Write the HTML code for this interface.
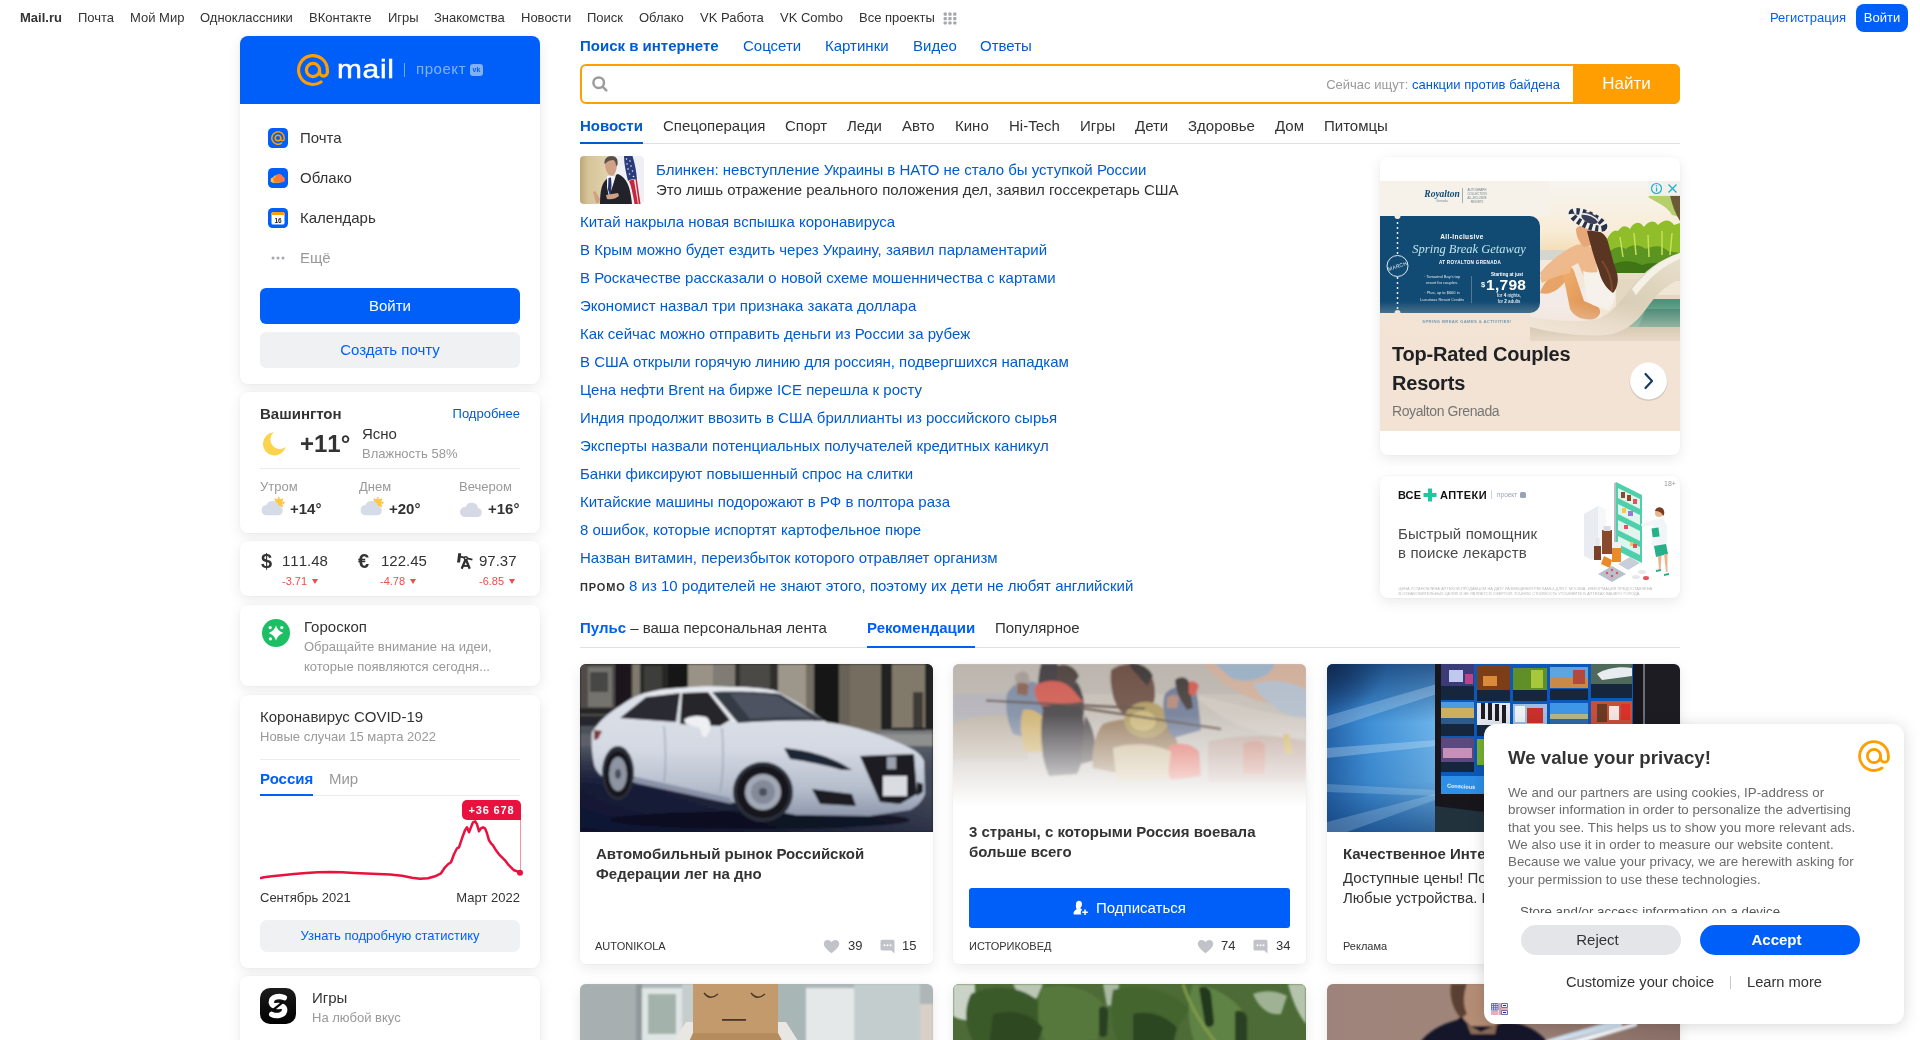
<!DOCTYPE html>
<html lang="ru">
<head>
<meta charset="utf-8">
<title>Mail.ru: почта, поиск в интернете, новости, игры</title>
<style>
*{box-sizing:border-box;margin:0;padding:0}
html,body{width:1920px;height:1040px;overflow:hidden;background:#fff}
body{font-family:"Liberation Sans",Arial,sans-serif;color:#333;font-size:15px;position:relative}
.nk{font-kerning:none}
a{text-decoration:none;color:#005bd1}
.abs{position:absolute}
/* top bar */
#top{position:absolute;left:0;top:0;width:1920px;height:36px;font-size:13px;line-height:36px;color:#333}
#top span,#top a{position:absolute;top:0;white-space:nowrap;color:#333}
#top .reg{color:#005ff9;left:1770px;font-size:13px}
#top .login{left:1856px;top:4px;width:52px;height:28px;line-height:28px;background:#005ff9;color:#fff;border-radius:8px;text-align:center;font-size:13px}
/* cards */
.card{position:absolute;background:#fff;border-radius:8px;box-shadow:0 4px 14px rgba(0,0,0,.085),0 0 3px rgba(0,0,0,.05)}
.grey{color:#999}
/* left */
#hdr{position:absolute;left:0;top:0;width:300px;height:68px;background:#005ff9;border-radius:8px 8px 0 0}
.mi{position:absolute;left:60px;font-size:15px;color:#333;line-height:20px}
.ico{position:absolute;left:28px;width:20px;height:20px;border-radius:4px;background:#005ff9}
.btn{position:absolute;left:20px;width:260px;height:36px;border-radius:6px;text-align:center;line-height:36px;font-size:15px}
.red{font-size:11px;line-height:14px;color:#f04b4b;white-space:nowrap}
.red i{display:inline-block;width:0;height:0;border-left:3.500px solid transparent;border-right:3.500px solid transparent;border-top:5px solid #f04b4b;margin-left:2px;vertical-align:.800px}
/* search */
#stabs a{position:absolute;top:36px;line-height:20px;font-size:15px;color:#005bd1;white-space:nowrap}
#search{position:absolute;left:580px;top:64px;width:1100px;height:40px;border:2px solid #ff9e00;border-radius:6px;background:#fff}
#sbtn{position:absolute;left:1573px;top:64px;width:107px;height:40px;background:#ff9e00;color:#fff;font-size:17px;line-height:39px;text-align:center;border-radius:0 6px 6px 0}
/* news */
#ntabs span{position:absolute;top:116px;line-height:20px;font-size:15px;color:#333;white-space:nowrap}
.nl{position:absolute;left:580px;font-size:15px;line-height:20px;color:#005bd1;white-space:nowrap}

/* feed */
.fc{position:absolute;width:353px;height:300px;background:#fff;border-radius:6px;box-shadow:0 4px 14px rgba(0,0,0,.085),0 0 3px rgba(0,0,0,.05);overflow:hidden}
.fc svg.im{position:absolute;left:0;top:0}
.ft{position:absolute;left:16px;font-size:15px;line-height:20px;font-weight:bold;color:#333;white-space:nowrap}
.src{position:absolute;left:15px;top:275px;font-size:11px;line-height:14px;color:#333;white-space:nowrap}
.cnt{position:absolute;top:272px;font-size:13px;line-height:20px;color:#333}
/* popup */
#pp{position:absolute;left:1484px;top:724px;width:420px;height:300px;background:#fff;border-radius:12px;box-shadow:0 2px 16px rgba(0,0,0,.16);overflow:hidden}
#pp p{position:absolute;left:23px;white-space:nowrap;font-size:13.33px;line-height:17.33px;color:#6b6b6b}
</style>
</head>
<body>
<div id="root" style="position:absolute;left:0;top:0;width:1920px;height:1040px;will-change:transform">

<!-- TOP BAR -->
<div id="top">
<span style="left:20px;font-weight:bold">Mail.ru</span>
<span style="left:78px">Почта</span>
<span style="left:130px">Мой Мир</span>
<span style="left:200px">Одноклассники</span>
<span style="left:309px">ВКонтакте</span>
<span style="left:388px">Игры</span>
<span style="left:434px">Знакомства</span>
<span style="left:521px">Новости</span>
<span style="left:587px">Поиск</span>
<span style="left:639px">Облако</span>
<span style="left:700px">VK Работа</span>
<span style="left:780px">VK Combo</span>
<span style="left:859px">Все проекты</span>
<svg class="abs" style="left:943px;top:11px" width="14" height="14" viewBox="0 -1 16 17.500" fill="#a5a7ad"><rect x="0" y="1" width="4" height="4" rx="1"/><rect x="6" y="1" width="4" height="4" rx="1"/><rect x="12" y="1" width="4" height="4" rx="1"/><rect x="0" y="6.5" width="4" height="4" rx="1"/><rect x="6" y="6.5" width="4" height="4" rx="1"/><rect x="12" y="6.5" width="4" height="4" rx="1"/><rect x="0" y="12" width="4" height="4" rx="1"/><rect x="6" y="12" width="4" height="4" rx="1"/><rect x="12" y="12" width="4" height="4" rx="1"/></svg>
<a class="reg">Регистрация</a>
<a class="login">Войти</a>
</div>

<!-- LEFT COLUMN -->
<div class="card" id="c-auth" style="left:240px;top:36px;width:300px;height:348px">
  <div id="hdr">
    <svg class="abs" style="left:56px;top:17px" width="34" height="34" viewBox="0 0 34 34" fill="none" stroke="#ff9e00" stroke-width="3.2" stroke-linecap="round"><circle cx="17" cy="17" r="6.6"/><path d="M23.6 17v2.2a3.9 3.9 0 0 0 7.8 0V17A14.4 14.4 0 1 0 25 29"/></svg>
    <div class="abs" style="left:97px;top:13px;font-size:26px;line-height:40px;color:#fff;letter-spacing:.6px;font-weight:400;-webkit-text-stroke:.5px #fff;transform:scaleX(1.15);transform-origin:0 0">mail</div>
    <div class="abs" style="left:164px;top:27px;width:1px;height:14px;background:rgba(255,255,255,.45)"></div>
    <div class="abs" style="left:176px;top:22px;font-size:15px;line-height:22px;color:rgba(255,255,255,.5);letter-spacing:.55px">проект</div>
    <div class="abs" style="left:230px;top:28px;width:13px;height:12px;border-radius:3px;background:rgba(255,255,255,.5);color:#005ff9;font-size:7px;line-height:12px;text-align:center;font-weight:bold">vk</div>
  </div>
  <svg class="abs" style="left:28px;top:92px" width="20" height="20" viewBox="0 0 20 20"><rect width="20" height="20" rx="4.500" fill="#005ff9"/><g fill="none" stroke="#ff9e00" stroke-width="1.500" stroke-linecap="round"><circle cx="10" cy="10" r="2.800"/><path d="M12.800 10v1a1.700 1.700 0 0 0 3.400 0v-1a6.200 6.200 0 1 0-2.700 5.100"/></g></svg><div class="mi" style="top:92px">Почта</div>
  <svg class="abs" style="left:28px;top:132px" width="20" height="20" viewBox="0 0 20 20"><rect width="20" height="20" rx="4.500" fill="#005ff9"/><path d="M5.800 14.500h6.500a2.500 2.500 0 0 0 0-5 3 3 0 0 0-5.800-.500A2.800 2.800 0 0 0 5.800 14.500z" fill="#ffc72e" transform="translate(-1.200,.2)"/><path d="M8.200 14.300h6a2.900 2.900 0 0 0 .6-5.700 4 4 0 0 0-7.600.6 2.600 2.600 0 0 0 1 5.100z" fill="#ff7a38"/></svg><div class="mi" style="top:132px">Облако</div>
  <svg class="abs" style="left:28px;top:172px" width="20" height="20" viewBox="0 0 20 20"><rect width="20" height="20" rx="4.500" fill="#005ff9"/><rect x="3.500" y="4" width="13" height="12.500" rx="1.500" fill="#fff"/><path d="M3.500 5.500a1.500 1.500 0 0 1 1.500-1.500h10a1.500 1.500 0 0 1 1.500 1.500v1.500h-13z" fill="#ff9e00"/><text x="10" y="15" font-family="Liberation Sans,sans-serif" font-size="6.500" font-weight="bold" fill="#222" text-anchor="middle">16</text></svg><div class="mi" style="top:172px">Календарь</div>
  <svg class="abs" style="left:31px;top:220px" width="14" height="4" viewBox="0 0 14 4" fill="#a5a7ad"><circle cx="2" cy="2" r="1.500"/><circle cx="7" cy="2" r="1.500"/><circle cx="12" cy="2" r="1.500"/></svg><div class="mi" style="top:212px;color:#999">Ещё</div>
  <div class="btn" style="top:252px;background:#005ff9;color:#fff">Войти</div>
  <div class="btn" style="top:296px;background:#f0f1f3;color:#005ff9">Создать почту</div>
</div>


<!-- WEATHER -->
<div class="card" style="left:240px;top:392px;width:300px;height:141px">
  <div class="abs" style="left:20px;top:12px;font-size:15px;line-height:20px;font-weight:bold;color:#333">Вашингтон</div>
  <a class="abs" style="right:20px;top:12px;font-size:13px;line-height:20px">Подробнее</a>
  <svg class="abs" style="left:21px;top:39px" width="26" height="26" viewBox="0 0 26 26"><path d="M12.800 1.300a11.600 11.600 0 1 0 11.900 14.600A9.300 9.300 0 0 1 12.800 1.300z" fill="#fcd34d"/></svg>
  <div class="abs" style="left:60px;top:36px;font-size:24px;line-height:32px;font-weight:bold;color:#333;font-kerning:none">+11°</div>
  <div class="abs" style="left:122px;top:32px;font-size:15px;line-height:20px">Ясно</div>
  <div class="abs grey" style="left:122px;top:53px;font-size:13px;line-height:18px">Влажность 58%</div>
  <div class="abs" style="left:20px;top:76px;width:260px;height:1px;background:#ececec"></div>
  <div class="abs grey" style="left:20px;top:86px;font-size:13px;line-height:18px">Утром</div>
  <div class="abs grey" style="left:119px;top:86px;font-size:13px;line-height:18px">Днем</div>
  <div class="abs grey" style="left:219px;top:86px;font-size:13px;line-height:18px">Вечером</div>
  <svg class="abs" style="left:20px;top:104px" width="26" height="22" viewBox="0 0 26 22"><g transform="translate(18.8 6.8)"><circle r="4" fill="#ffc83d"/><g fill="#ffb03a"><path d="M0-6.200l1.200 2H-1.200z"/><path d="M0-6.200l1.200 2H-1.200z" transform="rotate(45)"/><path d="M0-6.200l1.200 2H-1.200z" transform="rotate(90)"/><path d="M0-6.200l1.200 2H-1.200z" transform="rotate(135)"/><path d="M0-6.200l1.200 2H-1.200z" transform="rotate(-45)"/><path d="M0-6.200l1.200 2H-1.200z" transform="rotate(-90)"/></g></g><path d="M5.5 19.200h13a4.500 4.500 0 0 0 .6-8.900A6.700 6.700 0 0 0 6.400 9 5.200 5.200 0 0 0 5.500 19.200z" fill="#d6dbe8"/></svg>
  <div class="abs" style="left:50px;top:107px;font-size:15px;line-height:20px;font-weight:bold">+14°</div>
  <svg class="abs" style="left:119px;top:104px" width="26" height="22" viewBox="0 0 26 22"><g transform="translate(18.8 6.8)"><circle r="4" fill="#ffc83d"/><g fill="#ffb03a"><path d="M0-6.200l1.200 2H-1.200z"/><path d="M0-6.200l1.200 2H-1.200z" transform="rotate(45)"/><path d="M0-6.200l1.200 2H-1.200z" transform="rotate(90)"/><path d="M0-6.200l1.200 2H-1.200z" transform="rotate(135)"/><path d="M0-6.200l1.200 2H-1.200z" transform="rotate(-45)"/><path d="M0-6.200l1.200 2H-1.200z" transform="rotate(-90)"/></g></g><path d="M5.5 19.200h13a4.500 4.500 0 0 0 .6-8.900A6.700 6.700 0 0 0 6.400 9 5.200 5.200 0 0 0 5.500 19.200z" fill="#d6dbe8"/></svg>
  <div class="abs" style="left:149px;top:107px;font-size:15px;line-height:20px;font-weight:bold">+20°</div>
  <svg class="abs" style="left:218px;top:104px" width="26" height="22" viewBox="0 0 26 22"><path d="M6.5 21h13a4.5 4.5 0 0 0 .6-8.9A6.5 6.5 0 0 0 7.6 11 5 5 0 0 0 6.500 21z" fill="#d5d9e6"/></svg>
  <div class="abs" style="left:248px;top:107px;font-size:15px;line-height:20px;font-weight:bold">+16°</div>
</div>

<!-- CURRENCY -->
<div class="card" style="left:240px;top:541px;width:300px;height:55px">
  <div class="abs" style="left:21px;top:8px;font-size:20px;line-height:24px;font-weight:bold;color:#333">$</div>
  <div class="abs" style="left:42px;top:10px;font-size:15px;line-height:20px;font-kerning:none">111.48</div>
  <div class="abs red" style="left:42px;top:33px">-3.71 <i></i></div>
  <div class="abs" style="left:118px;top:8px;font-size:20px;line-height:24px;font-weight:bold;color:#333">€</div>
  <div class="abs" style="left:141px;top:10px;font-size:15px;line-height:20px;font-kerning:none">122.45</div>
  <div class="abs red" style="left:140px;top:33px">-4.78 <i></i></div>
  <svg class="abs" style="left:215px;top:11px" width="20" height="18" viewBox="0 0 20 18" fill="none" stroke="#2e2e2e" stroke-linecap="butt" stroke-linejoin="round"><path d="M3.200 1.200h3l-1.100 9.300h-3z" fill="#2e2e2e" stroke="none"/><path d="M5.300 4.700L17.400 7.700" stroke-width="1.800"/><path d="M10.800 7L6.700 16.700M10.800 7L14.700 16.700" stroke-width="2.300"/><path d="M8 13.900h5.600" stroke-width="1.900"/><circle cx="10.800" cy="6.200" r="1.500" fill="#fff" stroke-width="1.400"/></svg>
  <div class="abs" style="left:239px;top:10px;font-size:15px;line-height:20px;font-kerning:none">97.37</div>
  <div class="abs red" style="left:239px;top:33px">-6.85 <i></i></div>
</div>

<!-- HOROSCOPE -->
<div class="card" style="left:240px;top:605px;width:300px;height:81px">
  <svg class="abs" style="left:22px;top:14px" width="28" height="28" viewBox="0 0 28 28"><circle cx="14" cy="14" r="14" fill="#1dbf65"/><path d="M14 6.500Q15.800 12.200 21.300 14Q15.800 15.800 14 21.500Q12.200 15.800 6.700 14Q12.200 12.200 14 6.500z" fill="#fff"/><circle cx="8.200" cy="8.600" r="1.600" fill="#fff"/><circle cx="19.800" cy="8.600" r="1.600" fill="#fff"/><circle cx="8.400" cy="19.800" r="1.600" fill="#fff"/></svg>
  <div class="abs" style="left:64px;top:12px;font-size:15px;line-height:20px">Гороскоп</div>
  <div class="abs grey" style="left:64px;top:32px;font-size:13px;line-height:20px;white-space:nowrap">Обращайте внимание на идеи,<br>которые появляются сегодня...</div>
</div>

<!-- COVID -->
<div class="card" style="left:240px;top:695px;width:300px;height:273px">
  <div class="abs" style="left:20px;top:12px;font-size:15px;line-height:20px">Коронавирус COVID-19</div>
  <div class="abs grey" style="left:20px;top:33px;font-size:13px;line-height:18px">Новые случаи 15 марта 2022</div>
  <div class="abs" style="left:20px;top:64px;width:260px;height:1px;background:#ececec"></div>
  <div class="abs" style="left:20px;top:74px;font-size:15px;line-height:20px;font-weight:bold;color:#005ff9">Россия</div>
  <div class="abs grey" style="left:89px;top:74px;font-size:15px;line-height:20px">Мир</div>
  <div class="abs" style="left:20px;top:100px;width:260px;height:1px;background:#ececec"></div>
  <div class="abs" style="left:20px;top:99px;width:53px;height:2px;background:#005ff9"></div>
  <svg class="abs" style="left:20px;top:104px" width="266" height="82" viewBox="0 0 266 82"><path d="M0 83L4 82L12 81L22 80L34 78.800L46 77.700L58 77L70 76.600L82 77L94 77.700L106 78.200L118 78.700L130 79.300L142 80.500L152 82.400L160 83.500L168 83L175 81L181 78L185 72L188 69L191 67L194 59L197 53L199 52L202 43L205 35L207 32L209 37L211 32L213 27L215 26L217 29L219 36L221 33L223 32L225 33L227 38L229 45L231 48L233 50L236 55L239 59L242 62L245 65L248 69L251 72L254 75L257 76L260 77.500" transform="translate(0,-3.700)" fill="none" stroke="#e8123f" stroke-width="2.500" stroke-linejoin="round"/><line x1="260.500" y1="20" x2="260.500" y2="72" stroke="#e8123f" stroke-width="1" opacity=".45"/><circle cx="260" cy="73.800" r="3" fill="#e8123f"/></svg>
  <div class="abs" style="left:222px;top:105px;width:59px;height:20px;background:#e8123f;border-radius:5px 5px 0 5px;color:#fff;font-size:11px;font-weight:bold;line-height:20px;text-align:center;letter-spacing:.85px">+36 678</div>
  <div class="abs" style="left:20px;top:194px;font-size:13px;line-height:18px">Сентябрь 2021</div>
  <div class="abs" style="right:20px;top:194px;font-size:13px;line-height:18px">Март 2022</div>
  <div class="abs" style="left:20px;top:225px;width:260px;height:32px;background:#f0f1f3;border-radius:7px;color:#005ff9;font-size:13px;line-height:32px;text-align:center">Узнать подробную статистику</div>
</div>

<!-- GAMES -->
<div class="card" style="left:240px;top:976px;width:300px;height:90px">
  <div class="abs" style="left:20px;top:12px;width:36px;height:36px;border-radius:10px;background:linear-gradient(#1c1c1c,#000)"></div>
  <svg class="abs" style="left:20px;top:12px" width="36" height="36" viewBox="0 0 36 36" fill="none" stroke="#fff" stroke-width="5.400" stroke-linecap="round"><path d="M24.300 9.700C19.500 7.200 11.200 8.700 11.300 14.200c.1 4 5.200 4.700 8.700 4.200"/><path d="M11.700 26.300c4.800 2.500 13.100 1 13-4.500-.1-4-5.200-4.700-8.700-4.200"/><path d="M12.500 22.300L23.500 13.700" stroke="#0a0a0a" stroke-width="2.300" stroke-linecap="butt"/></svg>
  <div class="abs" style="left:72px;top:12px;font-size:15px;line-height:20px">Игры</div>
  <div class="abs grey" style="left:72px;top:33px;font-size:13px;line-height:18px">На любой вкус</div>
</div>

<!-- SEARCH -->
<div id="stabs">
<a style="left:580px;font-weight:bold">Поиск в интернете</a>
<a style="left:743px">Соцсети</a>
<a style="left:825px">Картинки</a>
<a style="left:913px">Видео</a>
<a style="left:980px">Ответы</a>
</div>
<div id="search"></div>
<div id="sbtn">Найти</div>

<!-- NEWS TABS -->
<div id="ntabs">
<span style="left:580px;font-weight:bold;color:#005bd1">Новости</span>
<span style="left:663px">Спецоперация</span>
<span style="left:785px">Спорт</span>
<span style="left:847px">Леди</span>
<span style="left:902px">Авто</span>
<span style="left:955px">Кино</span>
<span style="left:1009px">Hi-Tech</span>
<span style="left:1080px">Игры</span>
<span style="left:1135px">Дети</span>
<span style="left:1188px">Здоровье</span>
<span style="left:1275px">Дом</span>
<span style="left:1324px">Питомцы</span>
</div>
<div class="abs" style="left:580px;top:143px;width:1100px;height:1px;background:#e0e1e3"></div>
<div class="abs" style="left:580px;top:142px;width:63px;height:2px;background:#005bd1"></div>


<!-- search inner -->
<svg class="abs" style="left:591px;top:75px" width="18" height="18" viewBox="0 0 18 18" fill="none" stroke="#9c9c9c" stroke-width="2.500" stroke-linecap="round"><circle cx="7.700" cy="7.700" r="5.300"/><path d="M11.800 11.800L15.300 15.300"/></svg>
<div class="abs" style="right:360px;top:75px;font-size:13px;line-height:20px;white-space:nowrap;color:#999">Сейчас ищут: <a>санкции против байдена</a></div>

<!-- NEWS LIST -->
<svg class="abs" style="left:580px;top:156px;border-radius:4px" width="64" height="48" viewBox="0 0 64 48">
<defs><linearGradient id="bg1" x1="0" x2="1"><stop offset="0" stop-color="#bda678"/><stop offset=".25" stop-color="#d6c498"/><stop offset="1" stop-color="#e3d6b4"/></linearGradient><filter id="b1" x="-5%" y="-5%" width="110%" height="110%"><feGaussianBlur stdDeviation=".45"/></filter></defs>
<rect width="64" height="48" fill="#eef0f6"/><rect width="32" height="48" fill="url(#bg1)"/>
<g filter="url(#b1)">
<path d="M44 0h9c3 8 5 18 6 30l2 18H50c-1-10-2-18-4-24-2-8-3-16-2-24z" fill="#f3f3f6"/>
<path d="M44 0h8.500c2.500 8 4 16 4.500 24-3-1-6-1-9 1-2-8-4-17-4-25z" fill="#2b3a7c"/>
<g fill="#eef0f8"><circle cx="46.500" cy="3" r=".8"/><circle cx="50" cy="5" r=".8"/><circle cx="47" cy="8" r=".8"/><circle cx="51" cy="10" r=".8"/><circle cx="48" cy="13" r=".8"/><circle cx="52.500" cy="15" r=".8"/><circle cx="49.500" cy="18" r=".8"/><circle cx="53.500" cy="20.500" r=".8"/></g>
<path d="M49 25c2-1 4-1.500 5-1l4 24h-3.500c-1.500-9-3-17-5.500-23z" fill="#c8283c"/><path d="M55.500 24l1.500 0 3.500 24h-1.800z" fill="#c8283c"/>
<path d="M20 48c0-14 2-22 8-26l10-4c8 4 12 10 14 30z" fill="#22242c"/>
<path d="M27 20l9-1-3 10-4 12-2-10z" fill="#f4f5f8"/><path d="M28.500 22l2.500-.5.500 8-1 12-2.500-8z" fill="#25326c"/>
<path d="M25 8c0-5 3-7.500 6.500-7.500S37.500 3 37 9c-.3 5-2 9-4 11l-4-1c-2.500-2.500-4-6.500-4-11z" fill="#cfa285"/>
<path d="M24.500 8c-.5-5 2.500-8 7-8s7 3 6 9l-1.500 1c0-3-1-5-2.500-6-3 0-6 1-7.500 3z" fill="#5a5048"/>
<path d="M13 36c1-1 2.500-1 3.500 1l3.500 6-1 4h-3z" fill="#cfa285"/><path d="M26 39c4-1 8-1 12-2l1 3c-3 2.500-8 4-12 3z" fill="#cfa285"/>
</g>
</svg>
<a class="nl" style="left:656px;top:160px">Блинкен: невступление Украины в НАТО не стало бы уступкой России</a>
<div class="nl" style="left:656px;top:180px;color:#333">Это лишь отражение реального положения дел, заявил госсекретарь США</div>
<a class="nl" style="top:212px">Китай накрыла новая вспышка коронавируса</a>
<a class="nl" style="top:240px">В Крым можно будет ездить через Украину, заявил парламентарий</a>
<a class="nl" style="top:268px">В Роскачестве рассказали о новой схеме мошенничества с картами</a>
<a class="nl" style="top:296px">Экономист назвал три признака заката доллара</a>
<a class="nl" style="top:324px">Как сейчас можно отправить деньги из России за рубеж</a>
<a class="nl" style="top:352px">В США открыли горячую линию для россиян, подвергшихся нападкам</a>
<a class="nl" style="top:380px">Цена нефти Brent на бирже ICE перешла к росту</a>
<a class="nl" style="top:408px">Индия продолжит ввозить в США бриллианты из российского сырья</a>
<a class="nl" style="top:436px">Эксперты назвали потенциальных получателей кредитных каникул</a>
<a class="nl" style="top:464px">Банки фиксируют повышенный спрос на слитки</a>
<a class="nl" style="top:492px">Китайские машины подорожают в РФ в полтора раза</a>
<a class="nl" style="top:520px">8 ошибок, которые испортят картофельное пюре</a>
<a class="nl" style="top:548px">Назван витамин, переизбыток которого отравляет организм</a>
<div class="nl" style="top:576.500px;color:#333;font-size:11px;font-weight:bold;letter-spacing:.85px;line-height:21px">ПРОМО</div>
<a class="nl" style="left:629px;top:576px">8 из 10 родителей не знают этого, поэтому их дети не любят английский</a>

<!-- PULSE HEAD -->
<div class="nl" style="top:618px;color:#333"><a style="font-weight:bold;color:#005ff9">Пульс</a> – ваша персональная лента</div>
<a class="nl" style="left:867px;top:618px;font-weight:bold;color:#005ff9">Рекомендации</a>
<div class="nl" style="left:995px;top:618px;color:#333">Популярное</div>
<div class="abs" style="left:580px;top:647px;width:1100px;height:1px;background:#e0e1e3"></div>
<div class="abs" style="left:867px;top:646px;width:108px;height:2px;background:#005ff9"></div>


<!-- AD 1 -->
<div class="card" style="left:1380px;top:157px;width:300px;height:298px;border-radius:8px;box-shadow:0 4px 14px rgba(0,0,0,.085),0 0 3px rgba(0,0,0,.05)">
<svg class="abs" style="left:0;top:24px" width="300" height="250" viewBox="0 0 300 250">
<defs>
<linearGradient id="a1sky" x1="0" y1="0" x2="0" y2="1"><stop offset="0" stop-color="#f4efe6"/><stop offset=".5" stop-color="#f3e6d6"/><stop offset="1" stop-color="#ecd9c9"/></linearGradient>
<linearGradient id="a1fade" x1="0" y1="0" x2="0" y2="1"><stop offset="0" stop-color="#f3e3d4" stop-opacity="0"/><stop offset="1" stop-color="#f3e3d4"/></linearGradient>
<linearGradient id="a1chair" x1="0" y1="0" x2="1" y2="1"><stop offset="0" stop-color="#e6d9c4"/><stop offset="1" stop-color="#b9a88c"/></linearGradient>
</defs>
<rect width="300" height="250" fill="url(#a1sky)"/>
<defs>
<linearGradient id="a1sk2" x1="0" y1="0" x2="0" y2="1"><stop offset="0" stop-color="#f7f5f1"/><stop offset=".7" stop-color="#f8ecd6"/><stop offset="1" stop-color="#f3dcb4"/></linearGradient>
<linearGradient id="a1ch" x1="0" y1="1" x2="1" y2="0"><stop offset="0" stop-color="#f0e9dc"/><stop offset=".5" stop-color="#d8cdb6"/><stop offset="1" stop-color="#e9e0cc"/></linearGradient>
<linearGradient id="a1leg" x1="0" y1="0" x2="1" y2="1"><stop offset="0" stop-color="#f0b070"/><stop offset="1" stop-color="#d98a4a"/></linearGradient>
<filter id="a1b" x="-5%" y="-5%" width="110%" height="110%"><feGaussianBlur stdDeviation=".7"/></filter>
</defs>
<rect x="150" y="0" width="150" height="72" fill="url(#a1sk2)"/>
<rect x="0" y="0" width="170" height="36" fill="#f6f2ea"/>
<g filter="url(#a1b)">
<rect x="150" y="69" width="80" height="10" fill="#d5d6d0"/>
<!-- tree top right -->
<path d="M268 16c4-4 12-6 18-2l14 0v22l-8-2c-4-8-14-12-24-18z" fill="#b5cf6a"/><path d="M290 14h10v26c-4-6-8-16-10-26z" fill="#6a5a34"/>
<!-- greens -->
<path d="M226 60c4-8 8-12 12-10 4-6 8-6 12-2 4-8 10-8 14-2 4-6 10-8 14-2 6-6 12-6 16 0l6-2v52h-74z" fill="#8fbe2c"/>
<path d="M228 72c6-6 12-8 18-4 6-6 14-4 20 0 8-4 16-4 22 2l12 2v24h-72z" fill="#5c9420"/>
<path d="M232 84c10-6 22-4 30 0 10-4 22-2 38 4v12h-68z" fill="#3f7418"/>
<path d="M240 56l3 20M254 52l2 22M268 54l1 22M282 50l0 24M292 52l-2 22" stroke="#c6e05a" stroke-width="1.500"/>
<!-- pool right -->
<path d="M236 92h64v8h-64z" fill="#e8dcc4"/>
<path d="M236 98h64v30h-64z" fill="#e4d8c2"/><path d="M250 118h50v40h-80z" fill="#4a947c"/><path d="M266 128h34v28h-46z" fill="#2f7d68"/>
<path d="M280 100h20v14h-24z" fill="#efe6d6"/>
<!-- reflection under chair -->
<path d="M150 140c30 10 70 16 110 10l10 8H150z" fill="#9a8a66"/>
<path d="M150 146h150v14H150z" fill="#b9ad90"/>
<!-- white mat -->
<path d="M150 112c20-6 44-8 58-4l16 30c-20 6-50 4-74-2z" fill="#f3ebe8"/>
<!-- chair -->
<path d="M150 136c26 4 50 6 66 2 14-4 22-14 34-30 14-18 30-30 50-36v26c-14 6-24 16-34 30-10 14-22 24-40 26-24 2-52-2-76-8z" fill="url(#a1ch)"/>
<path d="M252 108c14-18 30-30 48-36v6c-16 6-30 18-44 36z" fill="#f6f1e6"/>
<!-- legs -->
<path d="M160 112c2-8 10-18 24-26 6-2 10 2 8 8l-14 14c-6 4-12 6-18 4z" fill="#e8a468"/>
<path d="M182 88c4-4 10-4 12 2l10 30 14 6c4 4 2 10-4 12-10 2-20-2-24-10z" fill="url(#a1leg)"/>
<path d="M160 96c10-6 22-10 32-12l-2 8c-10 2-20 6-28 10z" fill="#f0b884"/>
<!-- arm/back -->
<path d="M160 92c8-10 22-22 36-28 8-2 14 0 18 6l4 24-14 2-6-14c-10 6-24 12-36 16z" fill="#eeb98c"/>
<!-- swimsuit -->
<path d="M203 90c6 2 12 2 18 0l12 10c4 12 2 22-4 30l-16-6c-6-4-8-10-8-18z" fill="#f6f1ea"/>
<!-- head -->
<path d="M196 48c2-4 8-4 12-2l4 18-8 2c-4-4-8-10-8-18z" fill="#e6a878"/>
<!-- hair -->
<path d="M207 50c8-2 16 0 20 8 4 12 6 24 10 34 2 8 0 16-4 20-6-4-12-12-14-22-4-10-8-24-12-40z" fill="#5a3520"/>
<path d="M222 80c6 8 10 18 10 30" stroke="#7a4a2a" stroke-width="2" fill="none"/>
<!-- hat -->
<g transform="rotate(24 208 39)"><ellipse cx="208" cy="39" rx="23" ry="8.500" fill="#f3f1ee"/><ellipse cx="208" cy="39" rx="17.500" ry="5.500" fill="none" stroke="#2b3046" stroke-width="6.500" stroke-dasharray="3.200 3"/><ellipse cx="209" cy="36.500" rx="9" ry="5" fill="#3a3f58"/><path d="M200 36c5-3 13-3 18 0" stroke="#f3f1ee" stroke-width="1.600" fill="none"/></g>
</g>
<!-- ticket -->
<path d="M0 35h150a10 10 0 0 1 10 10v77a10 10 0 0 1-10 10H0z" fill="#114a73"/>
<line x1="17.500" y1="36" x2="17.500" y2="131" stroke="#e8eef3" stroke-width="1.500" stroke-dasharray="2 3"/>
<circle cx="17.500" cy="35" r="3" fill="#f4efe6"/><circle cx="17.500" cy="132" r="3" fill="#f1e3d3"/>
<circle cx="17.500" cy="85" r="10.500" fill="#114a73" stroke="#dfe8ee" stroke-width="1"/>
<text x="17.500" y="87" font-family="Liberation Sans,sans-serif" font-size="5" fill="#e8eef3" text-anchor="middle" transform="rotate(-18 17.500 85)" letter-spacing=".3">MARCH</text>
<text x="82" y="58" font-family="Liberation Sans,sans-serif" font-size="6.500" font-weight="bold" fill="#fff" text-anchor="middle" letter-spacing=".4">All-Inclusive</text>
<text x="89" y="72" font-family="Liberation Serif,serif" font-style="italic" font-size="12.500" fill="#bfe6ea" text-anchor="middle">Spring Break Getaway</text>
<text x="90" y="82.500" font-family="Liberation Sans,sans-serif" font-size="4.600" font-weight="bold" fill="#fff" text-anchor="middle" letter-spacing=".3">AT ROYALTON GRENADA</text>
<text x="62" y="97" font-family="Liberation Sans,sans-serif" font-size="4" fill="#dbe6ee" text-anchor="middle">· Tamarind Bay's top</text>
<text x="62" y="103" font-family="Liberation Sans,sans-serif" font-size="4" fill="#dbe6ee" text-anchor="middle">resort for couples.</text>
<text x="62" y="113" font-family="Liberation Sans,sans-serif" font-size="4" fill="#dbe6ee" text-anchor="middle">· Plus, up to $600 in</text>
<text x="62" y="119.500" font-family="Liberation Sans,sans-serif" font-size="4" fill="#dbe6ee" text-anchor="middle">Luxurious Resort Credits</text>
<line x1="91.500" y1="95" x2="91.500" y2="122" stroke="#6d8ea8" stroke-width=".7"/>
<text x="127" y="95" font-family="Liberation Sans,sans-serif" font-size="4.600" font-weight="bold" fill="#fff" text-anchor="middle">Starting at just</text>
<text x="101" y="106" font-family="Liberation Sans,sans-serif" font-size="7.500" font-weight="bold" fill="#fff">$</text>
<text x="106" y="109" font-family="Liberation Sans,sans-serif" font-size="15.500" font-weight="bold" fill="#fff" letter-spacing=".3">1,798</text>
<text x="129" y="116" font-family="Liberation Sans,sans-serif" font-size="4.600" fill="#fff" text-anchor="middle">for <tspan font-weight="bold">4</tspan> nights,</text>
<text x="129" y="121.500" font-family="Liberation Sans,sans-serif" font-size="4.600" fill="#fff" text-anchor="middle">for <tspan font-weight="bold">2</tspan> adults</text>
<!-- logo -->
<text x="62" y="16" font-family="Liberation Serif,serif" font-style="italic" font-weight="bold" font-size="9.500" fill="#114a73" text-anchor="middle">Royalton</text>
<text x="62" y="21" font-family="Liberation Sans,sans-serif" font-size="3" fill="#6d8ea8" text-anchor="middle">Grenada</text>
<line x1="82.500" y1="7" x2="82.500" y2="22" stroke="#6d7f8c" stroke-width=".6"/>
<text x="97" y="10" font-family="Liberation Sans,sans-serif" font-size="3" fill="#6d7f8c" text-anchor="middle">AUTOGRAPH</text>
<text x="97" y="14" font-family="Liberation Sans,sans-serif" font-size="3" fill="#6d7f8c" text-anchor="middle">COLLECTION</text>
<text x="97" y="18" font-family="Liberation Sans,sans-serif" font-size="2.600" fill="#6d7f8c" text-anchor="middle">ALL-INCLUSIVE</text>
<text x="97" y="21.500" font-family="Liberation Sans,sans-serif" font-size="2.600" fill="#6d7f8c" text-anchor="middle">RESORTS</text>
<text x="87" y="141.500" font-family="Liberation Sans,sans-serif" font-size="4.200" font-weight="bold" fill="#1f5f96" text-anchor="middle" letter-spacing=".35">SPRING BREAK GAMES &amp; ACTIVITIES!</text>
<rect x="0" y="120" width="300" height="50" fill="url(#a1fade)"/>
<rect x="0" y="170" width="300" height="80" fill="#f3e3d4"/>
<rect x="0" y="120" width="160" height="36" fill="none"/>
<!-- adchoices -->
<rect x="268" y="0" width="32" height="15" fill="#f3f1ec" opacity=".9"/>
<circle cx="276.500" cy="7.500" r="5" fill="none" stroke="#18b1d8" stroke-width="1.200"/><rect x="275.900" y="6.500" width="1.300" height="4" fill="#18b1d8"/><circle cx="276.500" cy="4.800" r=".8" fill="#18b1d8"/>
<path d="M288.500 3.500l8 8M296.500 3.500l-8 8" stroke="#18b1d8" stroke-width="1.300"/>
<!-- arrow btn -->
<circle cx="268.500" cy="201" r="19" fill="#000" opacity=".12"/>
<circle cx="268.500" cy="200" r="18.500" fill="#fff"/>
<path d="M265.500 193l6.500 7-6.500 7" fill="none" stroke="#143a66" stroke-width="2.200" stroke-linecap="round" stroke-linejoin="round"/>
</svg>
<div class="abs" style="left:12px;top:183px;font-size:20px;line-height:29px;font-weight:bold;color:#202124;white-space:nowrap;letter-spacing:-.2px">Top-Rated Couples<br>Resorts</div>
<div class="abs" style="left:12px;top:245px;font-size:14px;line-height:18px;color:#757575;white-space:nowrap;letter-spacing:-.4px">Royalton Grenada</div>
</div>

<!-- AD 2 -->
<div class="card" style="left:1380px;top:476px;width:300px;height:122px;border-radius:8px">
<div class="abs" style="left:18px;top:11px;font-size:11px;line-height:16px;font-weight:bold;color:#111;white-space:nowrap;letter-spacing:.1px">ВСЕ</div>
<svg class="abs" style="left:43px;top:11px" width="14" height="16" viewBox="0 0 14 16"><path d="M5 1.500h4V6h4.500v4H9v4.500H5V10H.5V6H5z" fill="#1fc7a0"/></svg>
<div class="abs" style="left:60px;top:11px;font-size:11px;line-height:16px;font-weight:bold;color:#111;white-space:nowrap;letter-spacing:.45px">АПТЕКИ</div>
<div class="abs" style="left:111px;top:14px;width:1px;height:9px;background:#cfd3da"></div>
<div class="abs" style="left:117px;top:12px;font-size:6.500px;line-height:14px;color:#9aa3b5;white-space:nowrap">проект</div>
<div class="abs" style="left:140px;top:16px;width:6px;height:6px;border-radius:1.500px;background:#9aa3b5"></div>
<div class="abs" style="left:18px;top:47.700px;font-size:15px;line-height:19px;color:#4a4a4a;white-space:nowrap;letter-spacing:.12px">Быстрый помощник<br>в поиске лекарств</div>
<div class="abs" style="left:284px;top:3px;font-size:7px;line-height:10px;color:#9a9a9a">18+</div>
<svg class="abs" style="left:200px;top:2px" width="96" height="106" viewBox="0 0 96 106">
<path d="M4 36l14-8 8 4v42l-14 8-8-4z" fill="#e9ecf0"/><path d="M18 28l8 4v42l-8 4z" fill="#f6f7f9"/>
<path d="M36 4l26 13v68L36 72z" fill="#4fd0ab"/><path d="M36 4l-2 1.500v68L36 72z" fill="#b9bec6"/><path d="M38 10l22 11v10L38 20zM38 26l22 11v10L38 36zM38 42l22 11v10L38 52zM38 58l22 11v8L38 66z" fill="#dff5ee"/>
<g fill="#8f4a2a"><rect x="41" y="14" width="4" height="6"/><rect x="47" y="17" width="4" height="6"/></g><g fill="#e8505b"><rect x="53" y="21" width="4" height="5"/><rect x="44" y="47" width="4" height="4"/><rect x="53" y="66" width="4" height="4"/></g><g fill="#9b7ad1"><rect x="48" y="33" width="5" height="5"/></g><g fill="#f2c94c"><rect x="42" y="30" width="4" height="5"/><rect x="50" y="64" width="3" height="4"/></g>
<path d="M22 52h10v24H22z" fill="#8a4a2d"/><rect x="23.500" y="48" width="7" height="5" fill="#d9dbe0"/>
<path d="M14 68h7v14h-7z" fill="#7a4028"/><rect x="15.500" y="60" width="4" height="8" fill="#e4e6ea"/>
<path d="M32 70h9v14h-9z" fill="#e98a2b"/><rect x="32" y="64" width="9" height="6" fill="#eef0f3"/>
<path d="M24 78l8 4-2 8-9-4z" fill="#e98a2b"/>
<path d="M18 96l14-8 14 8-14 8z" fill="#b9c0cc"/><path d="M38 86l12-7 10 6-12 7z" fill="#c9cfd9"/>
<g fill="#e8505b"><circle cx="27" cy="95" r="1.200"/><circle cx="32" cy="98" r="1.200"/><circle cx="37" cy="95" r="1.200"/><circle cx="32" cy="92" r="1.200"/></g>
<ellipse cx="62" cy="94" rx="4" ry="2" fill="#e6e8ec"/><ellipse cx="56" cy="99" rx="4" ry="2" fill="#e6e8ec"/><ellipse cx="66" cy="100" rx="3" ry="2" fill="#e8505b"/>
<circle cx="79" cy="35" r="4" fill="#e9b58f"/><path d="M75 33c1-5 8-5 9 0 1 3-1 5-1 5-1-4-5-5-8-5z" fill="#7a3b22"/>
<path d="M73 42l10-2 4 8v22l-12 2-4-6z" fill="#f2f5f8"/><path d="M73 42l-12 4 1 3 11-2z" fill="#f2f5f8"/>
<path d="M74 68l12-2 2 10-12 3z" fill="#27b08a"/><rect x="72" y="50" width="7" height="9" fill="#27b08a" transform="rotate(-8 75 54)"/>
<path d="M78 78l1 14h1.500l1-14zM84 76l2 18h1.500l0-18z" fill="#e9b58f"/><path d="M76 92l5-1v2l-5 1zM84 96l5-1v2l-5 1z" fill="#27b08a"/>
</svg>
<div class="abs" style="left:18.500px;top:110.800px;font-size:3.950px;line-height:4.700px;color:#b9b9b9;white-space:nowrap;letter-spacing:0">ЦЕНА УСТАНОВЛЕНА АПТЕКОЙ-ПРОДАВЦОМ НА ДАТУ РАЗМЕЩЕНИЯ РЕКЛАМЫ, ДЛЯ Г. МОСКВА. ИНФОРМАЦИЯ ПРЕДОСТАВЛЕНА<br>В ОЗНАКОМИТЕЛЬНЫХ ЦЕЛЯХ И НЕ ЯВЛЯЕТСЯ ОФЕРТОЙ. ТОЧНУЮ СТОИМОСТЬ УТОЧНЯЙТЕ В АПТЕКАХ ВАШЕГО ГОРОДА.</div>
</div>

<!-- FEED ROW 1 -->
<div class="fc" style="left:580px;top:664px">
<svg class="im" width="353" height="168" viewBox="0 0 353 168">
<defs>
<linearGradient id="car" x1="0" y1="0" x2="0" y2="1"><stop offset="0" stop-color="#dfe3ea"/><stop offset=".5" stop-color="#d3d8e2"/><stop offset=".8" stop-color="#b4bccb"/><stop offset="1" stop-color="#8e98ac"/></linearGradient>
<linearGradient id="road" x1="0" y1="0" x2="1" y2="0"><stop offset="0" stop-color="#0b1030"/><stop offset=".45" stop-color="#1b2138"/><stop offset="1" stop-color="#4d535e"/></linearGradient>
<linearGradient id="roadv" x1="0" y1="0" x2="0" y2="1"><stop offset="0" stop-color="#5a606b" stop-opacity=".9"/><stop offset=".5" stop-color="#2a3044" stop-opacity=".3"/><stop offset="1" stop-color="#0b1030" stop-opacity=".5"/></linearGradient>
<filter id="cb" x="-3%" y="-3%" width="106%" height="106%"><feGaussianBlur stdDeviation=".9"/></filter>
</defs>
<rect width="353" height="168" fill="#1c1a1a"/>
<g filter="url(#cb)">
<rect x="0" y="0" width="35" height="62" fill="#5f5a53"/><rect x="8" y="3" width="24" height="40" fill="#8d8981"/><rect x="10" y="8" width="18" height="20" fill="#55524e"/>
<rect x="35" y="0" width="16" height="62" fill="#1f1c1b"/><rect x="52" y="0" width="8" height="62" fill="#9a9080"/>
<rect x="60" y="0" width="28" height="62" fill="#2e2b29"/><rect x="64" y="2" width="18" height="30" fill="#4a4641"/>
<rect x="88" y="0" width="20" height="62" fill="#171515"/>
<rect x="108" y="0" width="25" height="62" fill="#b9af9e"/><rect x="133" y="0" width="22" height="62" fill="#9a9488"/>
<rect x="155" y="0" width="43" height="62" fill="#3a3633"/><rect x="160" y="0" width="30" height="30" fill="#5b554d"/>
<rect x="198" y="0" width="36" height="66" fill="#bdb4a3"/><rect x="226" y="0" width="8" height="66" fill="#8a8274"/>
<rect x="234" y="0" width="25" height="68" fill="#1b1918"/><rect x="259" y="0" width="11" height="68" fill="#7d7467"/>
<rect x="270" y="0" width="31" height="66" fill="#8c8371"/><rect x="301" y="0" width="11" height="66" fill="#2a2622"/>
<rect x="312" y="0" width="33" height="64" fill="#9b907c"/><rect x="333" y="28" width="10" height="36" fill="#4a443c"/><rect x="345" y="0" width="8" height="66" fill="#2a2623"/>
<rect x="0" y="44" width="35" height="6" fill="#2c2a2a"/>
<rect x="0" y="60" width="200" height="24" fill="#5d6068"/><rect x="0" y="52" width="40" height="10" fill="#2e2e33"/>
<rect x="230" y="66" width="123" height="20" fill="#8e8f8f"/>
<rect x="0" y="82" width="353" height="86" fill="url(#road)"/><rect x="0" y="82" width="353" height="86" fill="url(#roadv)"/>
<rect x="0" y="0" width="353" height="70" fill="#0c0e1a" opacity=".18"/><ellipse cx="180" cy="156" rx="150" ry="9" fill="#0a0d1c" opacity=".75"/>
<!-- body -->
<path d="M12 68C20 56 30 48 40 42C48 36 55 32 62 30C75 26 88 24 100 24C118 22 135 22 150 23C170 23 185 25 196 27C214 36 230 46 246 58C276 62 306 72 330 84C338 88 342 92 344 97L345 130C342 138 336 143 330 146L290 152L216 151C205 149 70 122 55 118L30 118C20 112 15 106 14 100C12 90 11 78 12 68z" fill="url(#car)"/>
<path d="M62 30C88 24 120 22 150 23C172 23 188 25 196 27L246 58C220 56 190 58 160 60z" fill="#e6e9ef"/>
<!-- windows -->
<path d="M40 54L66 33L100 29L96 58z" fill="#2a2a30"/>
<path d="M102 29L128 28L150 56L140 62L100 60z" fill="#26262c"/>
<path d="M132 28C160 27 185 28 200 30L245 57C215 56 185 57 158 59z" fill="#363a45"/>
<path d="M150 30C170 29 188 30 198 32L232 54C210 53 190 54 170 55z" fill="#4d5361"/>
<path d="M104 56c4-4 14-5 22-3 4 2 5 8 4 14l-4 6-4-1-2-8-14-4z" fill="#eef0f4"/>
<path d="M14 66l8 1-4 8-4 1z" fill="#7a3a3a"/>
<!-- shading lines -->
<path d="M84 62C86 85 86 105 84 118M142 64C144 90 143 115 140 128" stroke="#8f98ab" stroke-width="1" fill="none"/>
<path d="M52 112L150 134L152 140L55 119z" fill="#8a93a8"/><circle cx="183" cy="128" r="30" fill="#2a2d38"/><ellipse cx="38" cy="109" rx="16" ry="27" fill="#2a2d38"/>
<!-- headlight / grille -->
<path d="M204 84C226 86 252 92 272 106L262 106C245 101 225 97 210 95z" fill="#1e2534"/>
<path d="M280 92L334 90L337 130L320 140L300 138z" fill="#1d1e24"/><rect x="303" y="112" width="24" height="20" fill="#d9dce1"/><rect x="307" y="93" width="9" height="12" fill="#9aa0ad"/>
<path d="M232 125l40 5 4 12-36-2z" fill="#1a1c24"/><path d="M337 118l6 2 0 8-6 4z" fill="#1a1c24"/>
<!-- wheels -->
<ellipse cx="38" cy="110" rx="13" ry="23" fill="#14151c"/><ellipse cx="38" cy="110" rx="9" ry="17" fill="#8e94a2"/><ellipse cx="38" cy="110" rx="3" ry="5" fill="#4a4f5c"/>
<circle cx="183" cy="128" r="26" fill="#14151c"/><circle cx="183" cy="128" r="18" fill="#a3a9b6"/><circle cx="183" cy="128" r="12" fill="#838a99"/><circle cx="183" cy="128" r="4" fill="#4a4f5c"/>
</g>
</svg>
<div class="ft" style="top:180px">Автомобильный рынок Российской<br>Федерации лег на дно</div>
<div class="src">AUTONIKOLA</div>
<svg class="abs" style="left:243px;top:275px" width="17" height="15" viewBox="0 0 17 15"><path d="M8.500 14.200C4 10.500.800 7.900.800 4.700.800 2.500 2.500.900 4.600.900c1.600 0 3 .9 3.900 2.300C9.400 1.800 10.800.900 12.400.900c2.100 0 3.800 1.600 3.800 3.800 0 3.200-3.200 5.800-7.700 9.500z" fill="#c1c3c9"/></svg>
<div class="cnt" style="left:268px">39</div>
<svg class="abs" style="left:300px;top:275px" width="15" height="15" viewBox="0 0 15 15"><path d="M2 .800h11A1.500 1.500 0 0 1 14.500 2.300V14.500L11.300 11.500H2A1.500 1.500 0 0 1 .500 10V2.300A1.500 1.500 0 0 1 2 .800z" fill="#c1c3c9"/><circle cx="4.500" cy="6.300" r="1" fill="#fff"/><circle cx="7.500" cy="6.300" r="1" fill="#fff"/><circle cx="10.500" cy="6.300" r="1" fill="#fff"/></svg>
<div class="cnt" style="left:322px">15</div>
</div>

<div class="fc" style="left:953px;top:664px">
<svg class="im" width="353" height="168" viewBox="0 0 353 168">
<defs>
<linearGradient id="p2f" x1="0" y1="0" x2="0" y2="1"><stop offset="0" stop-color="#fff" stop-opacity=".12"/><stop offset=".3" stop-color="#fff" stop-opacity=".2"/><stop offset=".6" stop-color="#fff" stop-opacity=".62"/><stop offset=".85" stop-color="#fff" stop-opacity="1"/></linearGradient>
<filter id="blr" x="-5%" y="-5%" width="110%" height="110%"><feGaussianBlur stdDeviation="1.300"/></filter></defs>
<rect width="353" height="168" fill="#bdb6ad"/>
<g filter="url(#blr)">
<rect x="0" y="0" width="353" height="30" fill="#b3aca4"/>
<path d="M0 30h80v50H0z" fill="#a9a7ae"/><path d="M0 60c20-10 50-12 75-4v40H0z" fill="#b5a99a"/>
<path d="M250 0h103v40c-30 6-70-4-103-40z" fill="#c9a58e"/><path d="M262 0h60c-6 16-30 20-44 14z" fill="#8fa6bd"/><path d="M300 20c20-6 40-2 53 6v30c-20-4-40-14-53-36z" fill="#a8b4c4"/><path d="M240 30c30 6 70 20 113 24v20c-40 0-80-12-113-44z" fill="#c7bfb5"/>
<path d="M255 78c30-8 70-8 98 0v40h-98z" fill="#b59a90"/><path d="M290 80c8-4 16-4 22 0v30h-22z" fill="#c07a6a"/><path d="M330 70l6 0 4 20-8 0z" fill="#c9a94a"/>
<!-- left knight -->
<path d="M54 30c6-12 20-16 32-10l8 30-14 26-20-6c-6-12-8-28-6-40z" fill="#6d7c96"/>
<path d="M62 12c4-6 12-6 14 0l0 14-12 2z" fill="#9a8f88"/><path d="M64 20c4-2 10-2 12 2l-2 10-10-2z" fill="#7a5040"/>
<path d="M70 46c10-2 20 4 24 14l-4 28-18 0c-4-14-6-30-2-42z" fill="#c7a65c"/>
<!-- left horse dark -->
<path d="M88 0h16c6 6 8 16 6 24l14-6c6 8 8 22 6 36 4 20 2 40-6 56l-28 2c-8-20-10-44-6-66-6-14-6-32-2-46z" fill="#2f2a2e"/>
<path d="M104 2c8-4 18 0 22 10l-8 14-14-4z" fill="#3a2e2a"/>
<path d="M132 52c8 10 12 28 10 44l-14 4z" fill="#3b3436"/>
<!-- red cape -->
<path d="M82 22c12-8 30-6 38 4l10 12-40 4c-6-4-10-12-8-20z" fill="#c9483c"/>
<!-- right horse -->
<path d="M158 6c10-8 26-8 36 0 8 8 10 22 6 34l-30 10c-10-10-14-30-12-44z" fill="#5b3b2d"/>
<path d="M176 0c8-2 20 2 24 12l-6 10c-6-8-14-14-18-22z" fill="#2c2422"/>
<path d="M150 60c20-8 50-6 70 6l10 30-40 18-50-10c-2-16 2-34 10-44z" fill="#8a6a4a"/>
<!-- shield -->
<ellipse cx="193" cy="56" rx="22" ry="18" fill="#a38c4e"/><ellipse cx="190" cy="57" rx="13" ry="10" fill="#c2ab66"/>
<!-- right knight -->
<path d="M212 30c8-10 24-10 32 0l4 36-28 8c-8-12-12-30-8-44z" fill="#5c6a88"/>
<path d="M222 16c4-4 12-4 14 2l4 26-6 2c-6-8-12-20-12-30z" fill="#2e2624"/><path d="M236 18c4-2 8 0 10 4l-4 10-6-2z" fill="#c9483c"/>
<path d="M214 34c4-4 10-4 12 0l-2 10-10 0z" fill="#a87a68"/>
<!-- red caparison -->
<path d="M216 82c10-4 24-2 30 6l2 24-30 4c-6-10-6-24-2-34z" fill="#d9594b"/>
<path d="M160 84c20-6 44-4 58 4l-4 26-50 4z" fill="#c6b28a"/>
<!-- lances -->
<path d="M33 36.500L192 44.500" stroke="#4a342c" stroke-width="2"/><path d="M128 44l140 21" stroke="#4a342c" stroke-width="2"/>
</g>
<rect width="353" height="168" fill="url(#p2f)"/>
<rect x="0" y="142" width="353" height="26" fill="#fff"/>
</svg>
<div class="ft" style="top:158px">3 страны, с которыми Россия воевала<br>больше всего</div>
<div class="abs" style="left:16px;top:224px;width:321px;height:40px;background:#005ff9;border-radius:3px"></div>
<svg class="abs" style="left:120px;top:236px" width="16" height="16" viewBox="0 0 16 16" fill="#fff"><path d="M6 .800c1.800 0 3 1.400 3 3.300 0 1.300-.5 2.700-1.300 3.500-.3.300-.3 1 .1 1.200l1.500.8c-.9.700-1.500 1.800-1.500 3 0 .8.200 1.500.6 2H1.300c-.5 0-.9-.4-.8-.9.200-1.700 1-3.200 2.800-4.100.4-.2.400-.9.100-1.200C2.500 7.600 3 6.200 3 4.100 3 2.200 4.200.800 6 .800z"/><path d="M11.300 9.500h1.500v2h2v1.500h-2v2h-1.500v-2h-2V11.500h2z"/></svg>
<div class="abs" style="left:143px;top:234px;font-size:15px;line-height:20px;color:#fff;white-space:nowrap">Подписаться</div>
<div class="src" style="left:16px">ИСТОРИКОВЕД</div>
<svg class="abs" style="left:244px;top:275px" width="17" height="15" viewBox="0 0 17 15"><path d="M8.500 14.200C4 10.500.800 7.900.800 4.700.800 2.500 2.500.900 4.600.900c1.600 0 3 .9 3.900 2.300C9.400 1.800 10.800.900 12.400.900c2.100 0 3.800 1.600 3.800 3.800 0 3.200-3.200 5.800-7.700 9.500z" fill="#c1c3c9"/></svg>
<div class="cnt" style="left:268px">74</div>
<svg class="abs" style="left:300px;top:275px" width="15" height="15" viewBox="0 0 15 15"><path d="M2 .800h11A1.500 1.500 0 0 1 14.500 2.300V14.500L11.300 11.500H2A1.500 1.500 0 0 1 .500 10V2.300A1.500 1.500 0 0 1 2 .800z" fill="#c1c3c9"/><circle cx="4.500" cy="6.300" r="1" fill="#fff"/><circle cx="7.500" cy="6.300" r="1" fill="#fff"/><circle cx="10.500" cy="6.300" r="1" fill="#fff"/></svg>
<div class="cnt" style="left:323px">34</div>
</div>

<div class="fc" style="left:1327px;top:664px">
<svg class="im" width="353" height="168" viewBox="0 0 353 168">
<defs>
<linearGradient id="tv1" x1="0" y1="0" x2="1" y2="0"><stop offset="0" stop-color="#2563a8"/><stop offset=".35" stop-color="#3f8fd6"/><stop offset=".75" stop-color="#5ea9e4"/><stop offset="1" stop-color="#74b8ec"/></linearGradient>
<linearGradient id="tv2" x1="0" y1="0" x2="0" y2="1"><stop offset="0" stop-color="#123a70" stop-opacity=".75"/><stop offset=".35" stop-color="#123a70" stop-opacity="0"/><stop offset=".7" stop-color="#123a70" stop-opacity=".1"/><stop offset="1" stop-color="#0f3870" stop-opacity=".65"/></linearGradient>
<radialGradient id="tv3" cx="0" cy="0" r="1"><stop offset="0" stop-color="#10264a" stop-opacity=".9"/><stop offset=".5" stop-color="#10264a" stop-opacity="0"/></radialGradient>
<filter id="tvb" x="-3%" y="-3%" width="106%" height="106%"><feGaussianBlur stdDeviation=".6"/></filter>
</defs>
<rect width="120" height="168" fill="url(#tv1)"/><rect width="120" height="168" fill="url(#tv2)"/><rect width="120" height="100" fill="url(#tv3)"/>
<path d="M0 52l110-32v10L0 66z" fill="#cfe8fb" opacity=".28"/><path d="M0 84l110-8v6L0 94z" fill="#d8ecfc" opacity=".3"/><path d="M0 120l110 6v6L0 128z" fill="#cfe8fb" opacity=".22"/><path d="M0 158l108-28v6L20 168H0z" fill="#d8ecfc" opacity=".22"/>
<g filter="url(#tvb)">
<path d="M108 0h208v168H108z" fill="#15181c"/>
<path d="M114 0h192v130H114z" fill="#1158b8"/>
<rect x="114" y="0" width="33" height="22" fill="#3a3a78"/><rect x="122" y="6" width="14" height="12" fill="#c0c8f0"/><rect x="138" y="10" width="8" height="10" fill="#c0408a"/><rect x="114" y="22" width="33" height="14" fill="#16263c"/>
<rect x="150" y="2" width="33" height="24" fill="#7d3c16"/><rect x="156" y="12" width="14" height="10" fill="#d98a3a"/><rect x="150" y="26" width="33" height="11" fill="#16263c"/>
<rect x="186" y="4" width="34" height="22" fill="#5f8f26"/><rect x="204" y="6" width="12" height="18" fill="#a8c83a"/><rect x="186" y="26" width="34" height="11" fill="#16263c"/>
<rect x="223" y="3" width="38" height="12" fill="#5fa4dc"/><rect x="223" y="14" width="38" height="10" fill="#c98a4a"/><rect x="246" y="6" width="12" height="14" fill="#b34a3a"/><rect x="223" y="25" width="38" height="11" fill="#16263c"/>
<rect x="264" y="0" width="41" height="20" fill="#4f6a5a"/><path d="M270 10c8-6 24-8 35-6v8l-30 4z" fill="#e8ecf0"/><rect x="264" y="20" width="41" height="14" fill="#16263c"/>
<rect x="114" y="38" width="33" height="10" fill="#4f9be0"/><rect x="114" y="44" width="33" height="10" fill="#cfae62"/><rect x="114" y="54" width="33" height="6" fill="#2d5a8a"/><rect x="114" y="60" width="33" height="12" fill="#16263c"/>
<rect x="150" y="39" width="33" height="22" fill="#e4e8ee"/><path d="M154 39h4v16h-4zM161 39h4v17h-4zM168 40h4v17h-4zM175 41h4v18h-4z" fill="#1a1c22"/><rect x="150" y="61" width="33" height="11" fill="#16263c"/>
<rect x="186" y="40" width="34" height="20" fill="#9ec0e0"/><rect x="188" y="42" width="10" height="16" fill="#eef2f6"/><rect x="200" y="44" width="16" height="15" fill="#c8302a"/>
<rect x="223" y="39" width="38" height="12" fill="#3f96e6"/><rect x="223" y="50" width="38" height="6" fill="#b8b48a"/><rect x="223" y="55" width="38" height="5" fill="#2d6aa8"/>
<rect x="264" y="37" width="41" height="24" fill="#c8503a"/><rect x="270" y="40" width="10" height="18" fill="#6a3a22"/><rect x="282" y="42" width="10" height="14" fill="#f0e8e0"/><rect x="294" y="40" width="9" height="16" fill="#d8302a"/>
<rect x="114" y="74" width="33" height="24" fill="#5a4a80"/><rect x="116" y="84" width="29" height="10" fill="#c890b8"/><rect x="114" y="98" width="33" height="10" fill="#16263c"/>
<rect x="150" y="75" width="10" height="26" fill="#7ab030"/>
<rect x="114" y="112" width="60" height="18" fill="#2f8fe6"/>
<rect x="306" y="0" width="10" height="168" fill="#15181c"/><rect x="316" y="0" width="2" height="168" fill="#6a6e74"/><rect x="318" y="0" width="35" height="168" fill="#1b1d21"/>
<path d="M108 142l50 6v20h-50z" fill="#20303c"/>
</g>
<text x="120" y="123.500" font-family="Liberation Sans,sans-serif" font-size="5.500" font-weight="bold" fill="#e8f2ff" transform="rotate(3 120 123)">Conscious</text>
</svg>
<div class="ft" style="top:180px">Качественное Интернет ТВ</div>
<div class="abs" style="left:16px;top:204px;font-size:15px;line-height:20px;color:#333;white-space:nowrap">Доступные цены! Подключение за 5 минут<br>Любые устройства. Без договора</div>
<div class="src" style="left:16px">Реклама</div>
</div>

<!-- FEED ROW 2 -->
<div class="fc" style="left:580px;top:984px;height:120px">
<svg class="im" width="353" height="60" viewBox="0 0 353 60"><defs><filter id="r1b" x="-3%" y="-10%" width="106%" height="120%"><feGaussianBlur stdDeviation="1.200"/></filter></defs>
<rect width="353" height="60" fill="#aeb6b7"/>
<g filter="url(#r1b)"><rect x="0" y="0" width="56" height="60" fill="#a7afb1"/><rect x="56" y="0" width="6" height="60" fill="#8f989b"/><rect x="62" y="4" width="40" height="56" fill="#dfe5e4"/><rect x="68" y="10" width="28" height="40" fill="#a3b2aa"/><rect x="102" y="0" width="14" height="60" fill="#c6cdcd"/>
<rect x="196" y="0" width="30" height="60" fill="#a9b6b6"/><rect x="226" y="4" width="48" height="56" fill="#e4e8e8"/><rect x="274" y="0" width="66" height="60" fill="#c3cdcd"/><rect x="340" y="20" width="13" height="40" fill="#d8cfc6"/></g>
<path d="M92 60l14-22h8v22zM220 60l-14-22h-8v22z" fill="#e9e7e3"/>
<rect x="113" y="0" width="85" height="49" fill="#c29a6c"/><rect x="113" y="0" width="85" height="49" fill="none"/><path d="M108 60l5-11h85l6 11z" fill="#b58c5e"/>
<path d="M124 9q6 8 14 1M171 9q6 8 14 1" stroke="#4a3626" stroke-width="1.300" fill="none"/><rect x="142" y="35" width="24" height="1.800" fill="#4a3626"/>
</svg>
</div>
<div class="fc" style="left:953px;top:984px;height:120px">
<svg class="im" width="353" height="60" viewBox="0 0 353 60"><defs><filter id="r2b" x="-3%" y="-10%" width="106%" height="120%"><feGaussianBlur stdDeviation="1"/></filter></defs>
<rect width="353" height="60" fill="#4c6b36"/>
<g filter="url(#r2b)">
<path d="M0 0h22v34c-8 4-16 2-22-2z" fill="#c9d3c6"/><path d="M60 0h30l-6 14c-10 2-20-4-24-14z" fill="#b9c7b4"/><path d="M150 0h16l-2 20-10 2z" fill="#a9b9a2"/><path d="M300 10c10-4 24-4 34 2l-6 18c-12 2-22-6-28-20z" fill="#9fb394"/><path d="M335 0h18v40c-8-10-14-24-18-40z" fill="#b6c4ae"/>
<path d="M18 10c20-10 50-8 66 6 6 14 0 30-12 40l-50 4c-10-14-12-34-4-50z" fill="#3b5a2a"/>
<path d="M90 4c24-6 50 2 62 18l-8 34-50 4c-10-16-12-38-4-56z" fill="#56783c"/>
<path d="M160 6c26-8 60 0 76 20l-20 30-50 4c-8-16-10-36-6-54z" fill="#44652f"/>
<path d="M240 0c20 2 40 12 52 30l-10 30h-40c-8-20-8-42-2-60z" fill="#5f8244"/>
<path d="M40 30c20-6 40 0 50 14l-6 16H36z" fill="#2f4a22"/><path d="M180 30c16-4 34 2 44 14l-4 16h-40z" fill="#2c4620"/>
<path d="M230 0c6 20 18 40 34 60" stroke="#7f9a4a" stroke-width="3" fill="none"/>
<path d="M246 4c5-3 11 0 12 6l3 28c0 5-7 7-9 2z" fill="#24381c"/><path d="M282 28c5-3 11 0 12 6v26h-12z" fill="#2a4020"/><path d="M146 24c4-3 9-1 9 4l-1 22c-1 4-7 4-8 0z" fill="#2a4020"/>
</g>
</svg>
</div>
<div class="fc" style="left:1327px;top:984px;height:120px">
<svg class="im" width="353" height="60" viewBox="0 0 353 60"><defs><linearGradient id="r3" x1="0" x2="1"><stop offset="0" stop-color="#9d837b"/><stop offset=".4" stop-color="#a08579"/><stop offset="1" stop-color="#8a7068"/></linearGradient><filter id="r3b" x="-3%" y="-10%" width="106%" height="120%"><feGaussianBlur stdDeviation=".9"/></filter></defs>
<rect width="353" height="60" fill="url(#r3)"/>
<g filter="url(#r3b)">
<path d="M205 60l90-26v8l-70 18z" fill="#cfe0f0"/><path d="M230 60l80-22v4l-60 18z" fill="#eef4fa"/>
<path d="M92 60c8-12 22-20 38-24l10-8h30l12 10c16 2 30 8 40 22z" fill="#14172a"/>
<path d="M130 0h50c6 12 4 28-4 38l-10 4h-22c-12-8-18-26-14-42z" fill="#b48d76"/>
<path d="M124 0h16c-4 10-4 22 0 30l-6 4c-8-8-12-22-10-34z" fill="#5a4030"/><path d="M140 40l14 8 16-8-2 10h-24z" fill="#8a6a58"/>
</g>
</svg>
</div>

<!-- PRIVACY POPUP -->
<div id="pp"><div style="position:absolute;left:1px;top:0;width:419px;height:300px">
<div class="abs" style="left:23px;top:22px;font-size:18.67px;line-height:24px;font-weight:bold;color:#333;white-space:nowrap">We value your privacy!</div>
<svg class="abs" style="left:372px;top:15px" width="34" height="34" viewBox="0 0 34 34" fill="none" stroke="#ff9e00" stroke-width="2.800" stroke-linecap="round"><circle cx="17" cy="17" r="6.600"/><path d="M23.600 17v2.200a3.900 3.900 0 0 0 7.800 0V17A14.400 14.400 0 1 0 25 29"/></svg>
<p style="top:60px">We and our partners are using cookies, IP-address or<br>browser information in order to personalize the advertising<br>that you see. This helps us to show you more relevant ads.<br>We also use it in order to measure our website content.<br>Because we value your privacy, we are herewith asking for<br>your permission to use these technologies.</p>
<div class="abs" style="left:0;top:176px;width:419px;height:13px;overflow:hidden"><p style="left:35px;top:3px;color:#555">Store and/or access information on a device</p></div>
<div class="abs" style="left:36px;top:201px;width:160px;height:30px;border-radius:15px;background:#e4e5e9;color:#333;font-size:15px;line-height:30px;text-align:center;padding-right:7px">Reject</div>
<div class="abs" style="left:215px;top:201px;width:160px;height:30px;border-radius:15px;background:#005ff9;color:#fff;font-size:15px;font-weight:bold;line-height:30px;text-align:center;padding-right:7px">Accept</div>
<div class="abs" style="left:81px;top:248px;font-size:14.67px;line-height:20px;color:#333;white-space:nowrap">Customize your choice</div>
<div class="abs" style="left:245px;top:252px;width:1px;height:13px;background:#c8c8c8"></div>
<div class="abs" style="left:262px;top:248px;font-size:14.67px;line-height:20px;color:#333;white-space:nowrap">Learn more</div>
<svg class="abs" style="left:6px;top:279px" width="17" height="12" viewBox="0 0 17 12"><rect x="0" y="0" width="7.500" height="7.500" fill="#eef0fa"/><path d="M.4.400h6.700v6.700H.4zM.4 2.600h6.700M.4 4.800h6.700M2.600.4v6.700M4.800.4v6.700" stroke="#4a4fa0" stroke-width=".8" fill="none"/><path d="M0 9h7.500M0 11h7.500" stroke="#c8504f" stroke-width=".9"/><path d="M9 0v12" stroke="#c8504f" stroke-width="1"/><path d="M10.500.5h6v4h-6zM10.500 7.500h6v4h-6z" fill="#eef0fa" stroke="#4a4fa0" stroke-width=".8"/><path d="M9.500 6h7.500" stroke="#c8504f" stroke-width=".9"/><path d="M12 2.500h3M12 9.500h3" stroke="#2a2f70" stroke-width="1.200"/></svg>
</div></div>

</div>
</body>
</html>
